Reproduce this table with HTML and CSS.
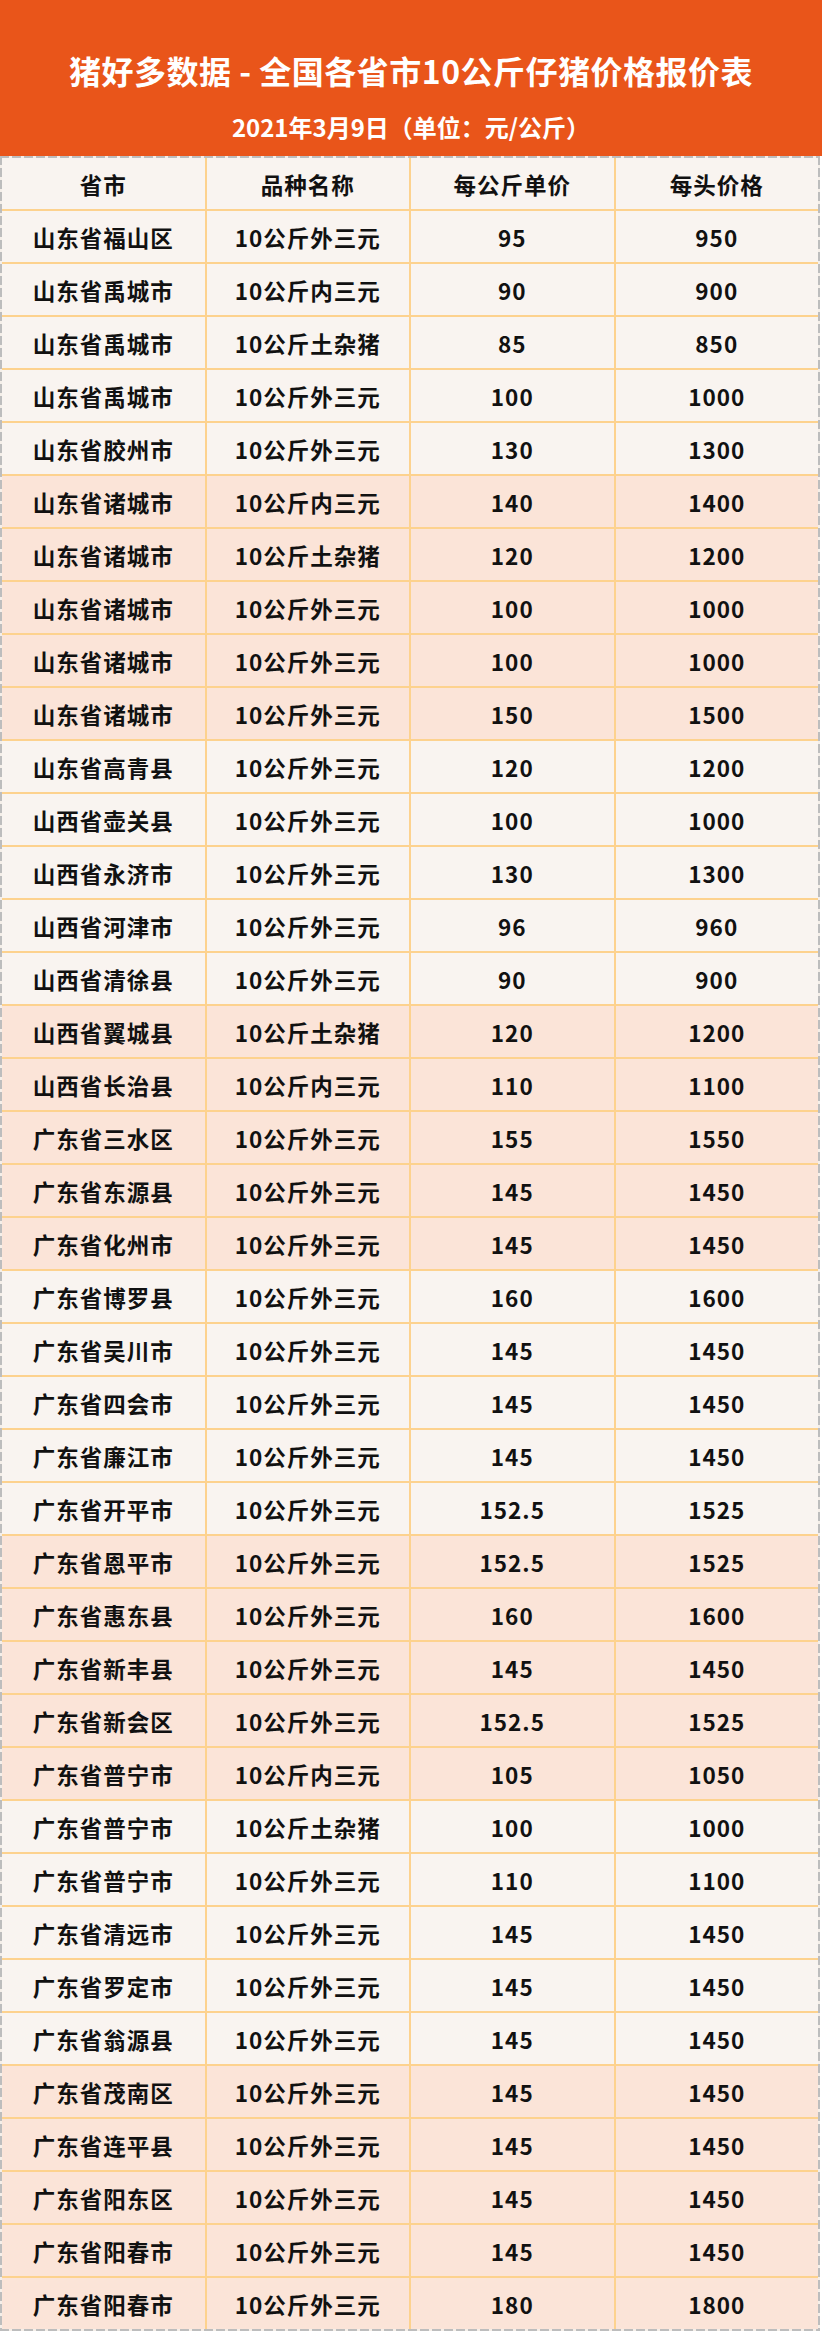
FILE: index.html
```html
<!DOCTYPE html>
<html lang="zh-CN">
<head>
<meta charset="utf-8">
<title>猪好多数据 - 全国各省市10公斤仔猪价格报价表</title>
<link rel="stylesheet" href="styles.css">
</head>
<body>
<div class="page">
  <header class="banner">
    <h1 class="title">猪好多数据 - 全国各省市10公斤仔猪价格报价表</h1>
    <p class="subtitle">2021年3月9日（单位：元/公斤）</p>
  </header>
  <div class="table">
    <div class="rows">
      <div class="row light head"><div class="cell">省市</div><div class="cell">品种名称</div><div class="cell">每公斤单价</div><div class="cell">每头价格</div></div>
      <div class="row light"><div class="cell">山东省福山区</div><div class="cell">10公斤外三元</div><div class="cell">95</div><div class="cell">950</div></div>
      <div class="row light"><div class="cell">山东省禹城市</div><div class="cell">10公斤内三元</div><div class="cell">90</div><div class="cell">900</div></div>
      <div class="row light"><div class="cell">山东省禹城市</div><div class="cell">10公斤土杂猪</div><div class="cell">85</div><div class="cell">850</div></div>
      <div class="row light"><div class="cell">山东省禹城市</div><div class="cell">10公斤外三元</div><div class="cell">100</div><div class="cell">1000</div></div>
      <div class="row light"><div class="cell">山东省胶州市</div><div class="cell">10公斤外三元</div><div class="cell">130</div><div class="cell">1300</div></div>
      <div class="row pink"><div class="cell">山东省诸城市</div><div class="cell">10公斤内三元</div><div class="cell">140</div><div class="cell">1400</div></div>
      <div class="row pink"><div class="cell">山东省诸城市</div><div class="cell">10公斤土杂猪</div><div class="cell">120</div><div class="cell">1200</div></div>
      <div class="row pink"><div class="cell">山东省诸城市</div><div class="cell">10公斤外三元</div><div class="cell">100</div><div class="cell">1000</div></div>
      <div class="row pink"><div class="cell">山东省诸城市</div><div class="cell">10公斤外三元</div><div class="cell">100</div><div class="cell">1000</div></div>
      <div class="row pink"><div class="cell">山东省诸城市</div><div class="cell">10公斤外三元</div><div class="cell">150</div><div class="cell">1500</div></div>
      <div class="row light"><div class="cell">山东省高青县</div><div class="cell">10公斤外三元</div><div class="cell">120</div><div class="cell">1200</div></div>
      <div class="row light"><div class="cell">山西省壶关县</div><div class="cell">10公斤外三元</div><div class="cell">100</div><div class="cell">1000</div></div>
      <div class="row light"><div class="cell">山西省永济市</div><div class="cell">10公斤外三元</div><div class="cell">130</div><div class="cell">1300</div></div>
      <div class="row light"><div class="cell">山西省河津市</div><div class="cell">10公斤外三元</div><div class="cell">96</div><div class="cell">960</div></div>
      <div class="row light"><div class="cell">山西省清徐县</div><div class="cell">10公斤外三元</div><div class="cell">90</div><div class="cell">900</div></div>
      <div class="row pink"><div class="cell">山西省翼城县</div><div class="cell">10公斤土杂猪</div><div class="cell">120</div><div class="cell">1200</div></div>
      <div class="row pink"><div class="cell">山西省长治县</div><div class="cell">10公斤内三元</div><div class="cell">110</div><div class="cell">1100</div></div>
      <div class="row pink"><div class="cell">广东省三水区</div><div class="cell">10公斤外三元</div><div class="cell">155</div><div class="cell">1550</div></div>
      <div class="row pink"><div class="cell">广东省东源县</div><div class="cell">10公斤外三元</div><div class="cell">145</div><div class="cell">1450</div></div>
      <div class="row pink"><div class="cell">广东省化州市</div><div class="cell">10公斤外三元</div><div class="cell">145</div><div class="cell">1450</div></div>
      <div class="row light"><div class="cell">广东省博罗县</div><div class="cell">10公斤外三元</div><div class="cell">160</div><div class="cell">1600</div></div>
      <div class="row light"><div class="cell">广东省吴川市</div><div class="cell">10公斤外三元</div><div class="cell">145</div><div class="cell">1450</div></div>
      <div class="row light"><div class="cell">广东省四会市</div><div class="cell">10公斤外三元</div><div class="cell">145</div><div class="cell">1450</div></div>
      <div class="row light"><div class="cell">广东省廉江市</div><div class="cell">10公斤外三元</div><div class="cell">145</div><div class="cell">1450</div></div>
      <div class="row light"><div class="cell">广东省开平市</div><div class="cell">10公斤外三元</div><div class="cell">152.5</div><div class="cell">1525</div></div>
      <div class="row pink"><div class="cell">广东省恩平市</div><div class="cell">10公斤外三元</div><div class="cell">152.5</div><div class="cell">1525</div></div>
      <div class="row pink"><div class="cell">广东省惠东县</div><div class="cell">10公斤外三元</div><div class="cell">160</div><div class="cell">1600</div></div>
      <div class="row pink"><div class="cell">广东省新丰县</div><div class="cell">10公斤外三元</div><div class="cell">145</div><div class="cell">1450</div></div>
      <div class="row pink"><div class="cell">广东省新会区</div><div class="cell">10公斤外三元</div><div class="cell">152.5</div><div class="cell">1525</div></div>
      <div class="row pink"><div class="cell">广东省普宁市</div><div class="cell">10公斤内三元</div><div class="cell">105</div><div class="cell">1050</div></div>
      <div class="row light"><div class="cell">广东省普宁市</div><div class="cell">10公斤土杂猪</div><div class="cell">100</div><div class="cell">1000</div></div>
      <div class="row light"><div class="cell">广东省普宁市</div><div class="cell">10公斤外三元</div><div class="cell">110</div><div class="cell">1100</div></div>
      <div class="row light"><div class="cell">广东省清远市</div><div class="cell">10公斤外三元</div><div class="cell">145</div><div class="cell">1450</div></div>
      <div class="row light"><div class="cell">广东省罗定市</div><div class="cell">10公斤外三元</div><div class="cell">145</div><div class="cell">1450</div></div>
      <div class="row light"><div class="cell">广东省翁源县</div><div class="cell">10公斤外三元</div><div class="cell">145</div><div class="cell">1450</div></div>
      <div class="row pink"><div class="cell">广东省茂南区</div><div class="cell">10公斤外三元</div><div class="cell">145</div><div class="cell">1450</div></div>
      <div class="row pink"><div class="cell">广东省连平县</div><div class="cell">10公斤外三元</div><div class="cell">145</div><div class="cell">1450</div></div>
      <div class="row pink"><div class="cell">广东省阳东区</div><div class="cell">10公斤外三元</div><div class="cell">145</div><div class="cell">1450</div></div>
      <div class="row pink"><div class="cell">广东省阳春市</div><div class="cell">10公斤外三元</div><div class="cell">145</div><div class="cell">1450</div></div>
      <div class="row pink"><div class="cell">广东省阳春市</div><div class="cell">10公斤外三元</div><div class="cell">180</div><div class="cell">1800</div></div>
    </div>
  </div>
</div>
</body>
</html>
```

FILE: styles.css
```css
html, body {
  margin: 0;
  padding: 0;
  background: #ffffff;
}

body {
  font-family: "Noto Sans CJK SC", "Noto Sans", sans-serif;
  color: #111111;
}

.page {
  width: 822px;
}

.banner {
  height: 156px;
  background: #e9551a;
  color: #ffffff;
  display: flex;
  flex-direction: column;
  align-items: center;
  box-sizing: border-box;
  padding-top: 50px;
}

.title {
  margin: 0;
  font-size: 32px;
  line-height: 40px;
  font-weight: 700;
  letter-spacing: 0.5px;
}

.subtitle {
  margin: 22px 0 0;
  font-size: 24px;
  line-height: 30px;
  font-weight: 700;
}

.table {
  width: 820px;
  padding: 2px;
  box-sizing: border-box;
  background-color: #f5efe9;
  background-image:
    repeating-linear-gradient(90deg, #bdbdbd 0 9px, transparent 9px 12px),
    repeating-linear-gradient(90deg, #bdbdbd 0 9px, transparent 9px 12px),
    repeating-linear-gradient(180deg, #bdbdbd 0 9px, transparent 9px 12px),
    repeating-linear-gradient(180deg, #bdbdbd 0 9px, transparent 9px 12px);
  background-size: 100% 2px, 100% 2px, 2px 100%, 2px 100%;
  background-position: left top, left bottom, left top, right top;
  background-repeat: no-repeat;
}

.rows {
  display: flex;
  flex-direction: column;
  gap: 2px;
  background: #fdd28e;
}

.row {
  display: grid;
  grid-template-columns: repeat(4, 1fr);
  column-gap: 2px;
  height: 51px;
}

.cell {
  display: flex;
  align-items: center;
  justify-content: center;
  font-size: 22.5px;
  font-weight: 700;
  letter-spacing: 1px;
  white-space: nowrap;
}

.light .cell {
  background: #f9f4f0;
}

.pink .cell {
  background: #fbe4d8;
}
```
